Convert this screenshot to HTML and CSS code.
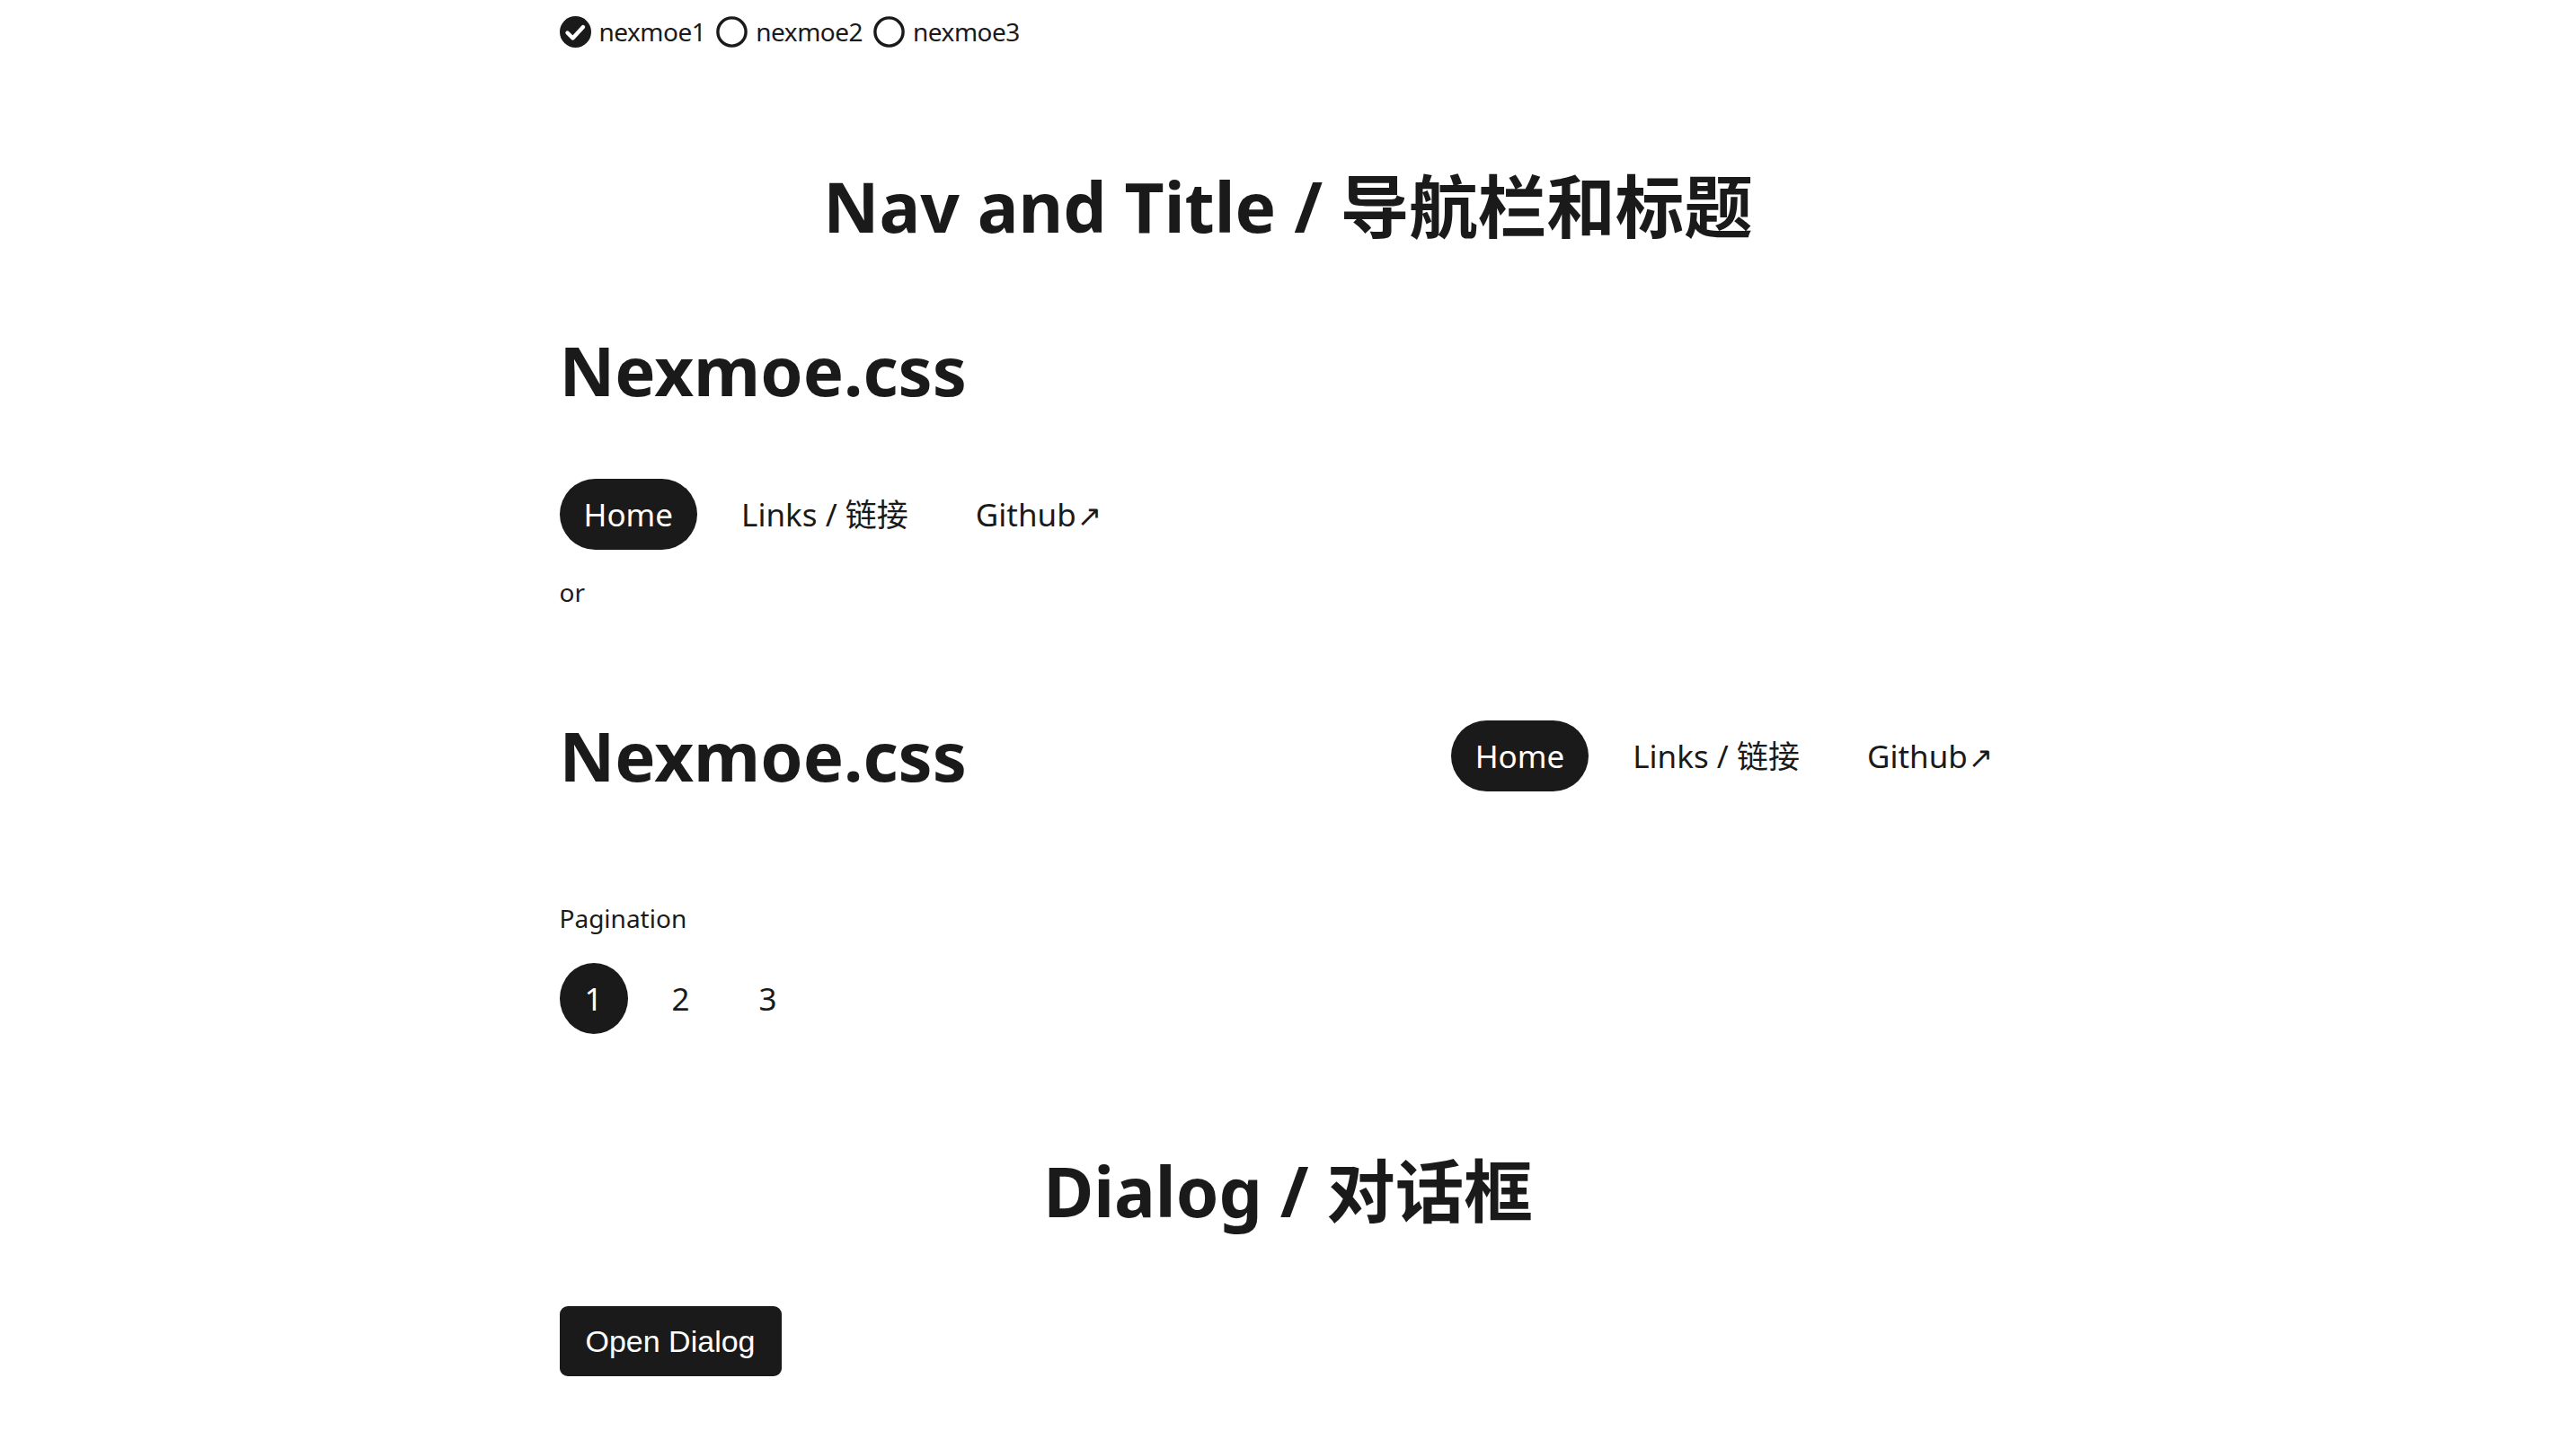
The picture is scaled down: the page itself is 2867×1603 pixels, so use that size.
FILE: index.html
```html
<!DOCTYPE html>
<html lang="zh-CN">
<head>
<meta charset="utf-8">
<title>Nexmoe.css</title>
<link rel="stylesheet" href="styles.css">
</head>
<body>
<div class="page">
  <div class="themes">
    <label class="theme">
      <svg viewBox="0 0 35 35" aria-hidden="true"><circle cx="17.5" cy="17.5" r="17.5" fill="#1a1a1a"/><path d="M8.5 18.5 L14.5 24.5 L26 12" fill="none" stroke="#fff" stroke-width="4.4" stroke-linecap="round" stroke-linejoin="round"/></svg>
      <span>nexmoe1</span>
    </label>
    <label class="theme">
      <svg viewBox="0 0 35 35" aria-hidden="true"><circle cx="17.5" cy="17.5" r="15.6" fill="none" stroke="#1a1a1a" stroke-width="3.4"/></svg>
      <span>nexmoe2</span>
    </label>
    <label class="theme">
      <svg viewBox="0 0 35 35" aria-hidden="true"><circle cx="17.5" cy="17.5" r="15.6" fill="none" stroke="#1a1a1a" stroke-width="3.4"/></svg>
      <span>nexmoe3</span>
    </label>
  </div>

  <h2 class="section-title section-title--nav">Nav and Title / 导航栏和标题</h2>

  <h1 class="brand brand--solo">Nexmoe.css</h1>
  <nav class="nav nav--solo">
    <a class="nav-item nav-item--active" href="#">Home</a>
    <a class="nav-item" href="#">Links / 链接</a>
    <a class="nav-item" href="#">Github<span class="ext">↗</span></a>
  </nav>

  <p class="or">or</p>

  <header class="header">
    <h1 class="brand">Nexmoe.css</h1>
    <nav class="nav">
      <a class="nav-item nav-item--active" href="#">Home</a>
      <a class="nav-item" href="#">Links / 链接</a>
      <a class="nav-item" href="#">Github<span class="ext">↗</span></a>
    </nav>
  </header>

  <p class="label">Pagination</p>
  <div class="pagination">
    <a class="page-item page-item--active" href="#">1</a>
    <a class="page-item" href="#">2</a>
    <a class="page-item" href="#">3</a>
  </div>

  <h2 class="section-title section-title--dialog">Dialog / 对话框</h2>
  <button class="btn" type="button">Open Dialog</button>
</div>
</body>
</html>
```

FILE: styles.css
```css
* { box-sizing: border-box; }

html, body {
  margin: 0;
  background: #ffffff;
}

body {
  font-family: "Noto Sans", "Noto Sans CJK SC", sans-serif;
  color: #1a1a1a;
  font-size: 28px;
  line-height: 40px;
}

.page {
  width: 1622px;
  margin: 0 auto;
}

/* theme switcher */
.themes {
  display: flex;
  align-items: center;
  height: 70px;
  gap: 12px;
}

.theme {
  display: flex;
  align-items: center;
  gap: 9px;
  line-height: 35px;
  letter-spacing: -0.5px;
}

.theme svg {
  display: block;
  width: 35px;
  height: 35px;
}

/* titles */
.section-title {
  margin: 0;
  font-size: 76.5px;
  line-height: 100px;
  font-weight: 700;
  text-align: center;
}

.section-title--nav { margin-top: 108.6px; }
.section-title--dialog { margin-top: 124.6px; }

.brand {
  margin: 0;
  font-size: 76px;
  line-height: 100px;
  font-weight: 700;
}

.brand--solo { margin-top: 83px; }

/* nav */
.nav {
  display: flex;
  gap: 23px;
}

.nav--solo { margin-top: 71.4px; }

.nav-item {
  display: block;
  height: 79px;
  padding: 0 26px;
  font-size: 35px;
  line-height: 79px;
  border-radius: 40px;
  color: inherit;
  text-decoration: none;
  white-space: nowrap;
}

.nav-item:first-child {
  padding: 0 27px;
}

.nav-item--active {
  background: #1a1a1a;
  color: #ffffff;
}

.ext {
  margin-left: 1px;
  font-family: "DejaVu Sans", sans-serif;
  font-size: 33px;
}

.or {
  margin: 26.6px 0 0;
}

.header {
  display: flex;
  justify-content: space-between;
  align-items: center;
  margin-top: 112.9px;
}

/* pagination */
.label {
  margin: 111px 0 0;
}

.pagination {
  display: flex;
  gap: 21px;
  margin-top: 29.4px;
}

.page-item {
  display: block;
  width: 76px;
  height: 79px;
  font-size: 35px;
  line-height: 79px;
  text-align: center;
  border-radius: 50%;
  color: inherit;
  text-decoration: none;
}

.page-item--active {
  background: #1a1a1a;
  color: #ffffff;
}

/* dialog */
.btn {
  display: block;
  margin-top: 78.4px;
  height: 78px;
  padding: 0 29px;
  font-family: "Liberation Sans", Arial, sans-serif;
  font-size: 34px;
  line-height: 78px;
  background: #1a1a1a;
  color: #ffffff;
  border: 0;
  border-radius: 9px;
}
```
